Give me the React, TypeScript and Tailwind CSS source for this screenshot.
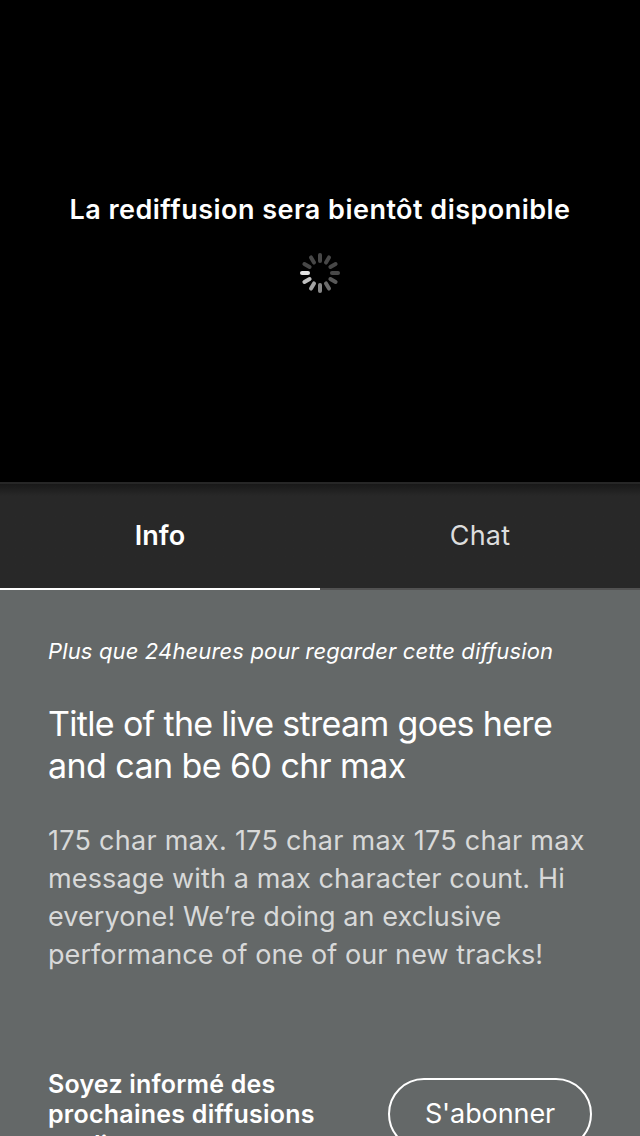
const SPOKES = [
  '#474747', '#474747', '#474747', '#484848', '#585858', '#6c6c6c',
  '#888888', '#a4a4a4', '#c0c0c0', '#e2e2e2', '#474747', '#474747',
];

function Spinner() {
  return (
    <svg width="40" height="40" viewBox="-20 -20 40 40" aria-hidden="true">
      {SPOKES.map((color, i) => (
        <rect key={i} x="-2" y="-20" width="4" height="10" rx="2" fill={color} transform={`rotate(${i * 30})`} />
      ))}
    </svg>
  );
}

export default function App() {
  return (
    <main className="flex h-[1136px] w-[640px] flex-col overflow-hidden bg-[#646868] font-['Inter',sans-serif] whitespace-nowrap text-white">
      <section className="flex h-[482px] shrink-0 flex-col items-center bg-black pt-[190px]">
        <p className="text-[27px] leading-10 font-semibold tracking-[0.47px]">La rediffusion sera bientôt disponible</p>
        <div className="mt-[23px]">
          <Spinner />
        </div>
      </section>
      <nav className="flex h-[108px] shrink-0 border-t-2 border-[#272727] bg-[#282828] bg-linear-to-b from-[#191919] to-[#282828] to-[12px] text-[27px]">
        <button className="w-1/2 border-b-2 border-white font-semibold">Info</button>
        <button className="w-1/2 border-b-2 border-[#525252] tracking-[0.2px] text-[#dcdddd]">Chat</button>
      </nav>
      <section className="flex flex-col items-start pl-12">
        <p className="mt-[46px] text-[22px] leading-[30px] tracking-[0.14px] italic">Plus que 24heures pour regarder cette diffusion</p>
        <h1 className="mt-[37px] text-[34px] leading-[42px] font-normal">
          <span className="block w-fit tracking-[-0.67px]">Title of the live stream goes here</span>
          <span className="block w-fit tracking-[-0.57px]">and can be 60 chr max</span>
        </h1>
        <div className="mt-[35px] text-[27px] leading-[38px] text-[#d8d9d9]">
          <p className="w-fit tracking-[0.26px]">175 char max. 175 char max 175 char max</p>
          <p className="w-fit tracking-[0.14px]">message with a max character count. Hi</p>
          <p className="w-fit tracking-[0.09px]">everyone! We’re doing an exclusive</p>
          <p className="w-fit tracking-[0.07px]">performance of one of our new tracks!</p>
        </div>
      </section>
      <section className="mt-[92px] flex h-[104px] shrink-0 items-start justify-between px-12">
        <div className="mt-[3px] text-[25px] leading-[30px] font-semibold">
          <p className="w-fit tracking-[0.2px]">Soyez informé des</p>
          <p className="w-fit tracking-[0.25px]">prochaines diffusions</p>
          <p className="mt-px w-fit tracking-[0.2px]">en direct</p>
        </div>
        <button className="mt-[12px] h-[72px] w-[204px] rounded-full border-2 border-white text-[27px] tracking-[-0.1px]">S'abonner</button>
      </section>
    </main>
  );
}
